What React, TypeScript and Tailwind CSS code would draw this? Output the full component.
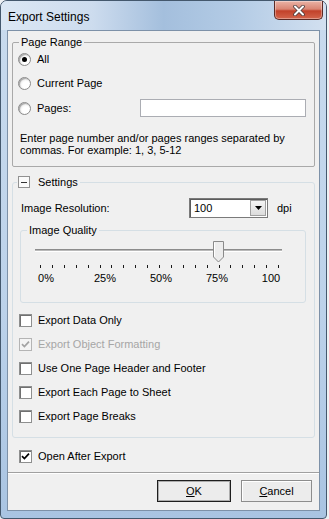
import React from 'react'

const Radio = ({ checked }: { checked?: boolean }) => (
  <span className="flex items-center justify-center w-[13px] h-[13px] shrink-0 rounded-full border border-[#8b8b8b] bg-[radial-gradient(circle_at_65%_65%,#ffffff_35%,#d9d9d9_100%)] shadow-[inset_1px_1px_1px_rgba(0,0,0,0.3)]">
    {checked && <span className="w-[5px] h-[5px] rounded-full bg-black" />}
  </span>
)

const Check = ({ checked, disabled }: { checked?: boolean; disabled?: boolean }) => (
  <span
    className={`flex items-center justify-center w-[13px] h-[13px] shrink-0 border ${
      disabled ? 'border-[#b4b4b4] bg-[#f4f4f4]' : 'border-[#8e8f8f] bg-white shadow-[inset_1px_1px_0_#707070]'
    }`}
  >
    {checked && (
      <svg width="9" height="9" viewBox="0 0 9 9">
        <path d="M1 4.2 L3.4 6.6 L8 1.6" stroke={disabled ? '#a3a3a3' : '#000'} strokeWidth="1.7" fill="none" />
      </svg>
    )}
  </span>
)

const CheckRow = ({ label, checked, disabled }: { label: string; checked?: boolean; disabled?: boolean }) => (
  <div className="flex items-center h-[24px] gap-[6px]">
    <Check checked={checked} disabled={disabled} />
    <span className={disabled ? 'text-[#a6a6a6]' : ''}>{label}</span>
  </div>
)

const ticks = Array.from({ length: 21 }, (_, i) => 19 + i * 11.9)

function QualitySlider() {
  return (
    <svg width="284" height="29" viewBox="0 0 284 29" className="mt-[3px] block">
      <rect x="14" y="9" width="247" height="1" fill="#8c8c8c" />
      <rect x="14" y="10" width="247" height="1" fill="#b9b9b9" />
      <rect x="14" y="11" width="247" height="1" fill="#ffffff" />
      {ticks.map((x) => (
        <rect key={x} x={Math.round(x)} y="25" width="1" height="3" fill="#1a1a1a" />
      ))}
      <path d="M192.5 1.5 H202.5 V17 L197.5 22 L192.5 17 Z" fill="#ececec" stroke="#8a8a8a" />
      <path d="M193.5 2.5 V16.6" stroke="#ffffff" />
    </svg>
  )
}

export default function App() {
  return (
    <div className="w-[329px] h-[519px] bg-[#eef1f4] font-['Liberation_Sans',Arial,sans-serif] text-[11px] leading-[13px] text-black">
      <div className="w-[327px] h-[519px] flex flex-col rounded-t-[7px] rounded-b-[4px] border border-[#44586d] bg-[linear-gradient(180deg,#c9dbee_0%,#bcd2ea_60%,#a9c4e2_100%)]">
        {/* title bar */}
        <div className="h-[29px] flex items-start rounded-t-[6px] bg-[linear-gradient(90deg,#dbe7f4_0%,#cddcee_28%,#a4bfdd_50%,#b3cbe5_72%,#d2e0f0_100%)]">
          <span className="pl-[7px] pt-[9px] text-[12px] leading-[15px]">Export Settings</span>
          <div className="ml-auto mr-[3px] w-[49px] h-[19px] flex items-center justify-center rounded-b-[5px] border border-t-0 border-[#5a2a25] bg-[linear-gradient(180deg,#eab3a6_0%,#d98573_45%,#c2412a_55%,#d3654c_100%)] shadow-[inset_0_0_0_1px_rgba(255,255,255,0.35)]">
            <svg width="12" height="11" viewBox="0 0 12 11">
              <path d="M2 1.5 L10 9.5 M10 1.5 L2 9.5" stroke="#4a3a3a" strokeWidth="3.6" strokeLinecap="round" />
              <path d="M2 1.5 L10 9.5 M10 1.5 L2 9.5" stroke="#ffffff" strokeWidth="2" strokeLinecap="round" />
            </svg>
          </div>
        </div>

        {/* client area */}
        <div className="mx-[6px] h-[481px] flex flex-col border border-[#7d91a8] bg-[#f0f0f0]">
          {/* Page Range */}
          <fieldset className="mx-[4px] mt-[5px] h-[131px] border border-[#a9a9a9] rounded-[2px]">
            <legend className="ml-[6px] px-[2px]">Page Range</legend>
            <div className="flex items-center h-[20px] pl-[5px] gap-[6px]">
              <Radio checked />
              <span>All</span>
            </div>
            <div className="flex items-center h-[20px] mt-[4px] pl-[5px] gap-[6px]">
              <Radio />
              <span>Current Page</span>
            </div>
            <div className="flex items-center h-[20px] mt-[5px] pl-[5px]">
              <Radio />
              <span className="ml-[6px]">Pages:</span>
              <div className="ml-auto mr-[8px] w-[166px] h-[18px] border border-[#abadb3] bg-white" />
            </div>
            <p className="mt-[14px] pl-[7px] leading-[12px]">
              Enter page number and/or pages ranges separated by
              <br />
              commas. For example: 1, 3, 5-12
            </p>
          </fieldset>

          {/* Settings */}
          <fieldset className="mx-[4px] mt-[8px] h-[263px] border border-[#d5dfe5] rounded-[3px]">
            <legend className="ml-[4px] px-[1px] flex items-center h-[14px]">
              <span className="w-[12px] h-[12px] flex items-center justify-center border border-[#919191] bg-[#fafafa]">
                <span className="w-[6px] h-px bg-[#333]" />
              </span>
              <span className="ml-[8px] pr-[1px]">Settings</span>
            </legend>

            <div className="flex items-center h-[20px] mt-[9px] pl-[8px]">
              <span className="w-[168px]">Image Resolution:</span>
              <div className="w-[79px] h-[20px] flex items-center border border-[#7a7a7a] bg-white shadow-[inset_1px_1px_0_#5c5c5c]">
                <span className="pl-[4px] flex-1">100</span>
                <span className="mr-[1px] w-[16px] h-[16px] flex items-center justify-center border border-[#a0a0a0] bg-[linear-gradient(180deg,#f4f4f4,#dcdcdc)]">
                  <svg width="7" height="4" viewBox="0 0 7 4">
                    <path d="M0 0 H7 L3.5 4 Z" fill="#000" />
                  </svg>
                </span>
              </div>
              <span className="ml-[9px]">dpi</span>
            </div>

            {/* Image Quality */}
            <fieldset className="ml-[7px] mt-[6px] w-[286px] h-[79px] border border-[#d5dfe5] rounded-[3px]">
              <legend className="ml-[6px] px-[2px]">Image Quality</legend>
              <QualitySlider />
              <div className="flex mt-[3px] pl-[5px]">
                <span className="w-[40px] text-center">0%</span>
                <span className="w-[40px] ml-[19px] text-center">25%</span>
                <span className="w-[40px] ml-[16px] text-center">50%</span>
                <span className="w-[40px] ml-[16px] text-center">75%</span>
                <span className="w-[40px] ml-[14px] text-center">100</span>
              </div>
            </fieldset>

            <div className="flex flex-col mt-[5px] pl-[6px]">
              <CheckRow label="Export Data Only" />
              <CheckRow label="Export Object Formatting" checked disabled />
              <CheckRow label="Use One Page Header and Footer" />
              <CheckRow label="Export Each Page to Sheet" />
              <CheckRow label="Export Page Breaks" />
            </div>
          </fieldset>

          <div className="flex items-center h-[20px] mt-[8px] pl-[11px] gap-[6px]">
            <Check checked />
            <span>Open After Export</span>
          </div>

          <div className="mt-[6px] h-px bg-[#a0a0a0]" />
          <div className="h-px bg-white" />

          <div className="flex justify-end mt-[6px] mr-[7px] gap-[10px]">
            <button className="w-[74px] h-[22px] border border-[#1e1e1e] bg-[#ececec] shadow-[inset_0_0_0_1px_#acacac] text-[11px]">
              <span className="underline">O</span>K
            </button>
            <button className="w-[71px] h-[22px] border border-[#8d8d8d] bg-[#ececec] shadow-[inset_1px_1px_0_#ffffff] text-[11px]">
              <span className="underline">C</span>ancel
            </button>
          </div>
        </div>
      </div>
    </div>
  )
}
